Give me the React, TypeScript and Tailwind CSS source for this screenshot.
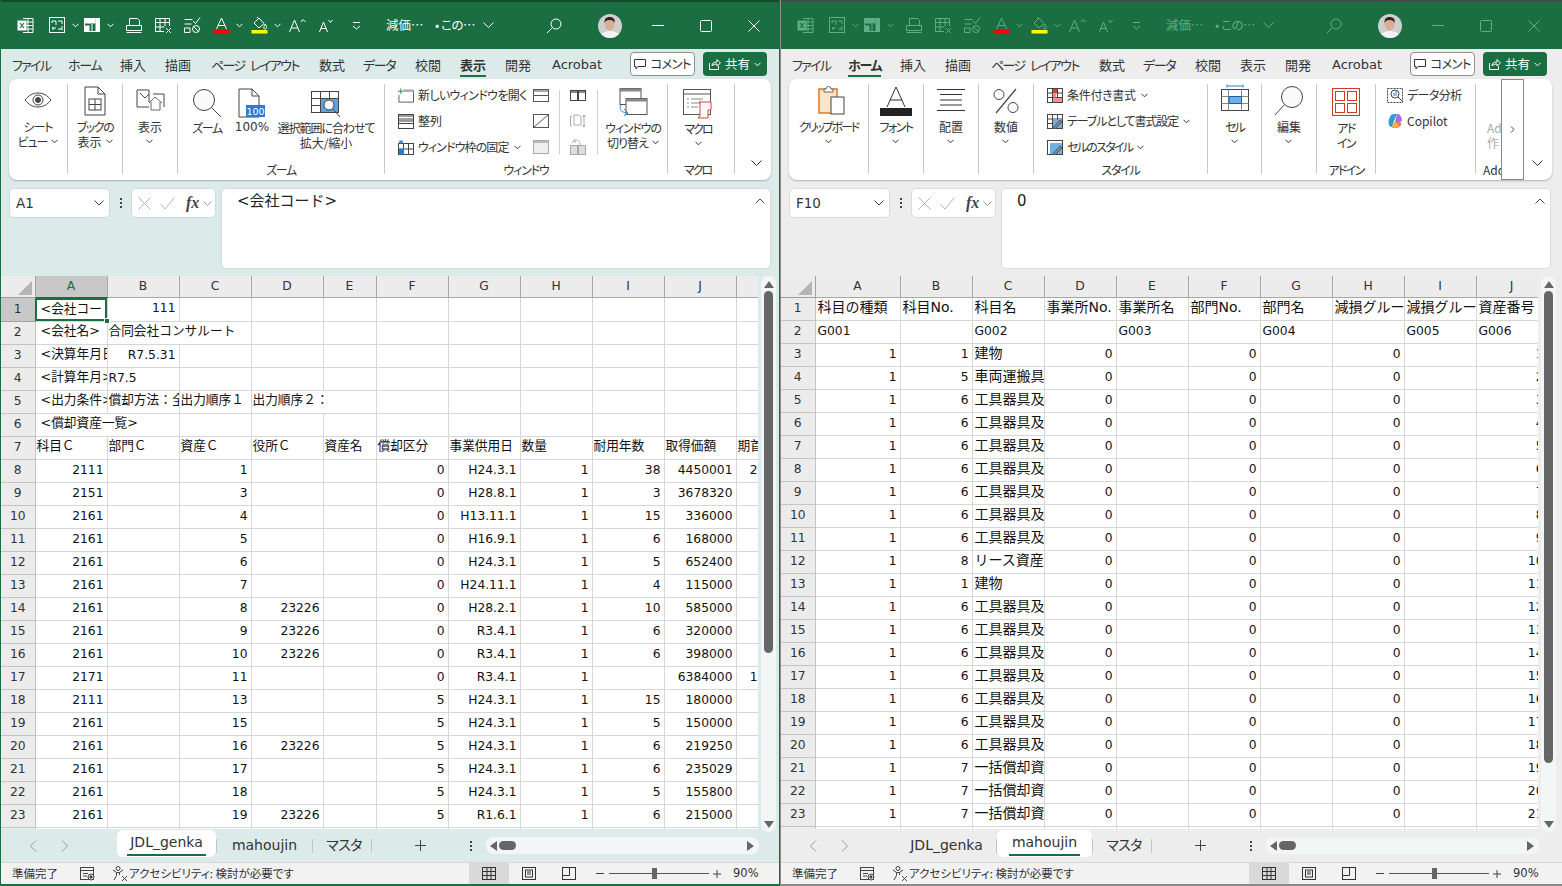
import React from "react";

const DK = "#444444";

const S = ({ w, h, children, className = "" }: { w: number; h: number; children: React.ReactNode; className?: string }) => (
  <svg width={w} height={h} viewBox={`0 0 ${w} ${h}`} fill="none" stroke="currentColor" strokeWidth="1" className={"shrink-0 block " + className}>
    {children}
  </svg>
);

const Chev = ({ className = "" }: { className?: string }) => (
  <svg width="7" height="5" viewBox="0 0 7 5" fill="none" stroke="currentColor" strokeWidth="1" className={"shrink-0 inline-block " + className}>
    <path d="M.5 .8 3.500 3.800 6.500 .8" />
  </svg>
);

const Q = {
  excel: () => (
    <S w={17} h={17}>
      <path d="M6 1.500h10v14H6" />
      <path d="M6 5h10M6 8.500h10M6 12h10M11 1.500v14" />
      <rect x=".5" y="3.500" width="9" height="10" fill="currentColor" stroke="none" />
      <path d="M3 6l4 5M7 6l-4 5" stroke="#1a6e41" strokeWidth="1.200" />
    </S>
  ),
  form: () => (
    <S w={17} h={17}>
      <rect x=".5" y=".5" width="15" height="15" />
      <path d="M3 4h4v4M3 4v2M9 4h4M13 4v3M9 12h3M13 9v4l-1.500-1.500M4 10v3M7 11H3" />
    </S>
  ),
  freeze: () => (
    <S w={17} h={17}>
      <rect x=".5" y="1.500" width="15" height="13" />
      <rect x="1" y="2" width="4" height="4" fill="currentColor" />
      <rect x="1" y="9" width="4" height="5" fill="currentColor" />
      <rect x="5" y="2" width="6" height="4" fill="currentColor" />
      <rect x="12" y="2" width="3" height="12" fill="currentColor" />
      <path d="M8 7v7" />
    </S>
  ),
  print: () => (
    <S w={17} h={17}>
      <path d="M3.500 8V1.500h8l2 2V8" />
      <path d="M.5 8.500h15v5H.5zM.5 15.500h15" />
    </S>
  ),
  tableX: () => (
    <S w={17} h={17}>
      <path d="M9 14.500H.5v-13h14V9M.5 5.500h14M.5 10h9M5 1.500v13M10 1.500V9" />
      <path d="M11 11l5 5M16 11l-5 5" />
    </S>
  ),
  checks: () => (
    <S w={17} h={17}>
      <path d="M.5 2.500h8M.5 7h7M.5 11h5.500v4.500H.5z" />
      <path d="M9 4l2.500 2.500L16 .5" />
      <circle cx="12" cy="12" r="3.500" />
      <path d="M9.500 9.500l5 5" />
    </S>
  ),
  fontA: () => (
    <svg width="17" height="17" viewBox="0 0 17 17" fill="none" stroke="currentColor" className="shrink-0 block">
      <path d="M3.500 12 8.500 1l5 11M5 8.500h7" />
      <rect x="0.500" y="13" width="16" height="3.500" fill="#ff0000" stroke="none" />
    </svg>
  ),
  fill: () => (
    <svg width="17" height="17" viewBox="0 0 17 17" fill="none" stroke="currentColor" className="shrink-0 block">
      <path d="M8 1 3 6l5 5 5-4.500zM7 1l-1-1M14 7c2 2 2 5 0 5s-1-3 0-5" />
      <rect x="0.500" y="13" width="16" height="3.500" fill="#ffff00" stroke="none" />
    </svg>
  ),
  grow: () => (
    <S w={17} h={15}>
      <path d="M.5 14 5.500 2l5 12M2.200 10h6.500M12 4l2-2.500L16.500 4" />
    </S>
  ),
  shrink: () => (
    <S w={14} h={15}>
      <path d="M.5 14 4.500 4l4 10M2 10.500h5M9.500 2l2 2.500L13.500 2" />
    </S>
  ),
  more: () => (
    <S w={9} h={9}>
      <path d="M1 1.500h7M1 5l3.500 3L8 5" />
    </S>
  ),
};

const Avatar = ({ id }: { id: string }) => (
  <svg width="24" height="24" viewBox="0 0 24 24" className="block shrink-0">
    <circle cx="12" cy="12" r="12" fill="#cfcfcf" />
    <clipPath id={id}><circle cx="12" cy="12" r="12" /></clipPath>
    <g clipPath={`url(#${id})`}>
      <path d="M2 24c0-5 5-7 10-7s10 2 10 7z" fill="#f4f4f4" />
      <ellipse cx="11.500" cy="10.500" rx="4.800" ry="6" fill="#d9ae94" />
      <path d="M6.500 9c-.5-4 2-6 5-6s6 1.500 5 6c-1-2-2-3-5-3s-4 1-5 3z" fill="#2a2522" />
    </g>
  </svg>
);

function TitleBar({ active }: { active: boolean }) {
  const c = active ? "text-white" : "text-[#5fae85]";
  return (
    <div className={`h-[49px] shrink-0 flex items-center bg-[#1a6e41] ${c} ${active ? "border-t-2 border-[#0f4a2a]" : "border-t-2 border-[#4a4a4a]"}`}>
      <div className="w-[16px] shrink-0" />
      <Q.excel />
      <div className="w-[15px]" />
      <Q.form />
      <Chev className="ml-[6px] mr-[5px]" />
      <Q.freeze />
      <Chev className="ml-[6px] mr-[12px]" />
      <Q.print />
      <div className="w-[12px]" />
      <Q.tableX />
      <div className="w-[12px]" />
      <Q.checks />
      <div className="w-[12px]" />
      <Q.fontA />
      <Chev className="ml-[6px] mr-[8px]" />
      <Q.fill />
      <Chev className="ml-[6px] mr-[8px]" />
      <Q.grow />
      <div className="w-[13px]" />
      <Q.shrink />
      <div className="w-[19px]" />
      <Q.more />
      <span className="ml-[25px] w-[49px] text-[12.500px] whitespace-nowrap">減価⋯</span>
      <span className="w-[48px] text-[12.500px] whitespace-nowrap tracking-[-0.5px]">• この⋯</span>
      <svg width="11" height="7" viewBox="0 0 11 7" fill="none" stroke="currentColor" className="shrink-0"><path d="M.5 .5l5 5 5-5" /></svg>
      <svg width="16" height="16" viewBox="0 0 16 16" fill="none" stroke="currentColor" className="shrink-0 ml-[52px]"><circle cx="10" cy="6" r="5" /><path d="M6.500 9.500 1 15" /></svg>
      <div className="w-[36px]" />
      <Avatar id={active ? "av1" : "av2"} />
      <svg width="12" height="1" viewBox="0 0 12 1" stroke="currentColor" className="shrink-0 ml-[30px]"><path d="M0 .5h12" /></svg>
      <svg width="12" height="12" viewBox="0 0 12 12" fill="none" stroke="currentColor" className="shrink-0 ml-[36px]"><rect x=".5" y=".5" width="11" height="11" rx="1" /></svg>
      <svg width="12" height="12" viewBox="0 0 12 12" fill="none" stroke="currentColor" className="shrink-0 ml-[36px]"><path d="M.5 .5l11 11M11.500 .5l-11 11" /></svg>
    </div>
  );
}

const TABS: [string, string, string][] = [
  ["ファイル", "w-[56px]", "tracking-[-1.700px]"],
  ["ホーム", "w-[52px]", "tracking-[-1.300px]"],
  ["挿入", "w-[45px]", ""],
  ["描画", "w-[46px]", ""],
  ["ページ レイアウト", "w-[108px]", "tracking-[-1.600px] [word-spacing:4px]"],
  ["数式", "w-[44px]", ""],
  ["データ", "w-[52px]", "tracking-[-1.300px]"],
  ["校閲", "w-[45px]", ""],
  ["表示", "w-[45px]", ""],
  ["開発", "w-[47px]", ""],
];

function TabRow({ selected, pr }: { selected: string; pr: string }) {
  return (
    <div className={`h-[30px] shrink-0 flex items-center text-[13px] text-[#333] pl-[11px] ${pr}`}>
      {TABS.map(([t, w, tk]) => (
        <div key={t} className={`${w} shrink-0 pt-[2px]`}>
          <span className={`inline-block leading-[18px] pt-[2px] pb-[1px] whitespace-nowrap border-b-2 ${tk} ${t === selected ? "border-[#1a6e41] font-bold" : "border-transparent"}`}>{t}</span>
        </div>
      ))}
      <span className="font-['DejaVu_Sans',sans-serif] text-[13px] mt-[2px]">Acrobat</span>
      <div className="flex-1" />
      <div className="w-[65px] h-[24px] rounded-[4px] border border-[#8e8e8e] bg-white flex items-center justify-center gap-[4px] text-[12.500px] tracking-[-0.800px]">
        <svg width="12" height="11" viewBox="0 0 12 11" fill="none" stroke="#333" className="shrink-0"><path d="M.5 .5h11v7H4L2 10V7.500H.5z" /></svg>
        コメント
      </div>
      <div className="ml-[8px] w-[64px] h-[24px] rounded-[4px] bg-[#1a6e41] text-white flex items-center justify-center gap-[4px] text-[12.500px]">
        <svg width="12" height="12" viewBox="0 0 12 12" fill="none" stroke="white" className="shrink-0"><path d="M.5 5v6.500h9V8M3 8c0-3 2-4 5-4V1.500L11.500 5 8 8V6C6 6 4 6.500 3 8z" /></svg>
        共有
        <Chev />
      </div>
    </div>
  );
}

const TR: Record<string, string> = {
  "シート": "tracking-[-1px]",
  "ビュー": "tracking-[-1px]",
  "ブックの": "tracking-[-1.500px]",
  "ズーム": "tracking-[-1.300px]",
  "選択範囲に合わせて": "tracking-[-1px]",
  "ウィンドウの": "tracking-[-1.200px]",
  "切り替え": "tracking-[-1px]",
  "マクロ": "tracking-[-2px]",
  "クリップボード": "tracking-[-2.100px]",
  "フォント": "tracking-[-1.500px]",
  "セル": "tracking-[-2px]",
  "アド": "tracking-[-1.500px]",
  "イン": "tracking-[-1.500px]",
  "新しいウィンドウを開く": "tracking-[-0.650px]",
  "ウィンドウ枠の固定": "tracking-[-0.900px]",
  "条件付き書式": "tracking-[-0.300px]",
  "テーブルとして書式設定": "tracking-[-1.100px]",
  "セルのスタイル": "tracking-[-1.700px]",
  "データ分析": "tracking-[-0.600px]",
  "ウィンドウ": "tracking-[-1.200px]",
  "スタイル": "tracking-[-1.200px]",
  "アドイン": "tracking-[-1.700px]",
  "100%": "font-['DejaVu_Sans',sans-serif]",
};
const tr = (t?: string) => (t && TR[t]) || "";

function Group({ w, label, children, lp = "" }: { w: string; label?: string; children: React.ReactNode; lp?: string }) {
  return (
    <div className={`${w} shrink-0 h-[90px] flex flex-col border-r border-[#c8c8c8]`}>
      <div className="flex-1 min-h-0 flex">{children}</div>
      <div className={`h-[12px] -mb-[2px] mt-[-2px] flex items-center justify-center text-[12px] leading-[12px] whitespace-nowrap text-[#333] ${lp} ${tr(label)}`}>{label}</div>
    </div>
  );
}

function Big({ icon, lines, w, chev = "inline", pt = "pt-[2px]", lt = "" }: { icon: React.ReactNode; lines: string[]; w: string; chev?: "inline" | "below" | "none"; pt?: string; lt?: string }) {
  return (
    <div className={`${w} shrink-0 flex flex-col items-center text-[12px] leading-[15px] text-[#333]`}>
      <div className={`h-[36px] w-full flex items-start justify-center ${pt}`}>{icon}</div>
      <div className={`flex flex-col items-center whitespace-nowrap ${lt}`}>
        {lines.map((l, i) => (
          <div key={l} className="flex items-center gap-[4px]">
            <span className={tr(l)}>{l}</span>
            {chev === "inline" && i === lines.length - 1 ? <Chev /> : null}
          </div>
        ))}
        {chev === "below" ? <div className="h-[15px] flex items-center"><Chev /></div> : null}
      </div>
    </div>
  );
}

function Small({ icon, text, chev }: { icon: React.ReactNode; text: string; chev?: boolean }) {
  return (
    <div className="h-[26px] flex items-center gap-[4px] text-[12px] whitespace-nowrap text-[#333]">
      <span className="w-[16px] flex justify-center shrink-0">{icon}</span>
      <span className={tr(text)}>{text}</span>
      {chev ? <Chev className="ml-[1px]" /> : null}
    </div>
  );
}

const IconEye = () => (
  <svg width="28" height="16" viewBox="0 0 28 16" fill="none" stroke={DK}><path d="M1 8c4-5 8-7 13-7s9 2 13 7c-4 5-8 7-13 7S5 13 1 8z" /><circle cx="14" cy="8" r="5" /><circle cx="14" cy="8" r="2.500" fill={DK} /></svg>
);
const IconBook = () => (
  <svg width="22" height="30" viewBox="0 0 22 30" fill="none" stroke={DK}><path d="M1 1h13l7 7v21H1zM14 1v7h7" /><rect x="5" y="13" width="12" height="11" /><path d="M5 18.500h12M11 13v11" /></svg>
);
const IconView = () => (
  <svg width="29" height="24" viewBox="0 0 29 24" fill="none" stroke={DK}><path d="M1 18V1h12v12M1 18h12M17 5h11M28 5v13" /><path d="M4 4l5 5 4-4" /><path d="M13 14l6-6 7 6M15 13v8h9v-8" stroke="#666" fill="#fff" /></svg>
);
const IconSearch = () => (
  <svg width="30" height="30" viewBox="0 0 30 30" fill="none" stroke={DK}><circle cx="12" cy="12" r="10.500" fill="#fafafa" /><path d="M19.500 19.500 29 29" /></svg>
);
const IconSearchR = () => (
  <svg width="30" height="30" viewBox="0 0 30 30" fill="none" stroke={DK}><circle cx="18" cy="11" r="10.500" fill="#fafafa" /><path d="M10.500 18.500 1 29" /></svg>
);
const Icon100 = () => (
  <svg width="28" height="30" viewBox="0 0 28 30" fill="none"><path d="M1 1h13l7 7v21H1zM14 1v7h7" stroke={DK} /><rect x="8" y="17" width="19" height="12" fill="#2b7cd3" /><text x="17.500" y="26.500" fontSize="9.500" fill="#fff" textAnchor="middle" fontFamily="DejaVu Sans">100</text></svg>
);
const IconFit = () => (
  <svg width="31" height="28" viewBox="0 0 31 28" fill="none"><rect x=".5" y=".5" width="27" height="21" stroke={DK} /><path d="M.5 7.500h27M.5 14.500h10M9.500 .5v21M18.500 .5v7" stroke={DK} /><rect x="10" y="8" width="17" height="13" fill="#5ba3de" /><circle cx="18" cy="14" r="5" fill="#fafafa" stroke={DK} /><path d="M22 18l7 8" stroke={DK} /></svg>
);
const IconSwitch = () => (
  <svg width="30" height="30" viewBox="0 0 30 30" fill="none"><rect x="2" y=".5" width="21" height="16" fill="#fff" stroke="#555" /><rect x="2" y=".5" width="21" height="3" fill="#888" /><rect x="8" y="10.500" width="21" height="16" fill="#fff" stroke="#555" /><rect x="8" y="10.500" width="21" height="3" fill="#888" /><path d="M3 17c-3 5 2 8 7 8M6 21l4 4-4 3" stroke="#2b88d8" /></svg>
);
const IconMacro = () => (
  <svg width="30" height="30" viewBox="0 0 30 30" fill="none"><rect x=".5" y=".5" width="27" height="25" fill="#fff" stroke="#555" /><path d="M.5 5h27" stroke="#555" /><path d="M4 10h2M8 10h12M4 14h2M8 14h10M4 18h2M8 18h7" stroke="#888" /><path d="M16 13h12v8h-3v8H15l2-2V13z" fill="#fff" stroke="#e03a3a" /></svg>
);

const ms = {
  newWin: () => <svg width="17" height="15" viewBox="0 0 17 15" fill="none" stroke="#555"><path d="M6 2.500h10.500v12H1V7" /><path d="M6 1h10.500v2.500H6z" fill="#aaa" stroke="none" /><path d="M3 0v6M0 3h6" stroke="#2b8a4b" /></svg>,
  arrange: () => <svg width="16" height="15" viewBox="0 0 16 15" fill="none" stroke="#444"><rect x=".5" y=".5" width="15" height="14" /><path d="M.5 5h15M.5 9.500h15" /><rect x="1" y="1" width="14" height="2" fill="#999" stroke="none" /><rect x="1" y="6" width="14" height="2" fill="#999" stroke="none" /></svg>,
  freeze: () => <svg width="16" height="15" viewBox="0 0 16 15" fill="none" stroke="#444"><rect x=".5" y="3.500" width="15" height="11" /><path d="M5.500 3.500v11M10.500 3.500v11M.5 9h15" /><rect x="1" y="9" width="5" height="5.500" fill="#2b7cd3" stroke="none" /><path d="M3 0v4M1 1l4 2M5 1L1 3" stroke="#2b7cd3" /></svg>,
  split: () => <svg width="16" height="13" viewBox="0 0 16 13" fill="none" stroke="#555"><rect x=".5" y=".5" width="15" height="12" /><path d="M.5 6.500h15" /><rect x="1" y="1" width="14" height="2" fill="#aaa" stroke="none" /></svg>,
  hide: () => <svg width="16" height="14" viewBox="0 0 16 14" fill="none" stroke="#555"><rect x=".5" y=".5" width="15" height="13" /><path d="M1 13 15 1" /></svg>,
  unhide: () => <svg width="16" height="14" viewBox="0 0 16 14" fill="#eee" stroke="#aaa"><rect x=".5" y=".5" width="15" height="13" /><rect x="1" y="1" width="14" height="2" fill="#bbb" stroke="none" /></svg>,
  book: () => <svg width="16" height="11" viewBox="0 0 16 11" fill="none" stroke="#444"><rect x=".5" y=".5" width="7" height="10" /><rect x="8.500" y=".5" width="7" height="10" /><rect x="1" y="1" width="6" height="2" fill="#888" stroke="none" /><rect x="9" y="1" width="6" height="2" fill="#888" stroke="none" /></svg>,
  sync: () => <svg width="16" height="14" viewBox="0 0 16 14" fill="none" stroke="#aaa"><path d="M2 2H.5v10H2M4 1h5l2 2v8H4zM14 1v12M12.500 3 14 1l1.500 2M12.500 11l1.500 2 1.500-2" /></svg>,
  reset: () => <svg width="16" height="16" viewBox="0 0 16 16" fill="none" stroke="#aaa"><rect x=".5" y="6.500" width="7" height="9" fill="#ddd" /><rect x="8.500" y="6.500" width="7" height="9" fill="#ddd" /><path d="M2 4l2-3 2 3M4 1c4 0 6 1 6 5" /></svg>,
  cond: () => <svg width="16" height="15" viewBox="0 0 16 15" fill="none" stroke="#444"><rect x=".5" y=".5" width="15" height="14" /><path d="M.5 5h15M.5 9.500h15M5.500 .5v14M10.500 .5v14" /><rect x="6" y="1" width="4" height="4" fill="#e03a3a" stroke="none" /><rect x="6" y="10" width="9" height="4" fill="#f09090" stroke="none" /><rect x="6" y="5.500" width="3" height="4" fill="#f09090" stroke="none" /></svg>,
  tableF: () => <svg width="16" height="15" viewBox="0 0 16 15" fill="none" stroke="#444"><rect x=".5" y=".5" width="15" height="14" /><path d="M.5 5h15M5.500 .5v14M10.500 .5v14M.5 9.500h15" /><rect x="6" y="5.500" width="9" height="8.500" fill="#6fb1e6" stroke="none" /><path d="M6 14l7-8 2 2-7 7z" fill="#888" stroke="#555" /></svg>,
  cellS: () => <svg width="16" height="15" viewBox="0 0 16 15" fill="none" stroke="#444"><rect x=".5" y=".5" width="15" height="14" /><rect x="3" y="3" width="12" height="11" fill="#6fb1e6" stroke="none" /><path d="M6 14l7-8 2 2-7 7z" fill="#888" stroke="#555" /></svg>,
  data: () => <svg width="16" height="15" viewBox="0 0 16 15" fill="none" stroke="#444"><rect x=".5" y=".5" width="15" height="14" strokeDasharray="2 1" /><circle cx="8" cy="6" r="4" fill="#fff" /><path d="M7 8V5M9 8V3" stroke="#2b7cd3" /><path d="M11 9l4 4" /></svg>,
  copilot: () => <svg width="16" height="16" viewBox="0 0 16 16"><path d="M3 4c1-3 3-3 5-3h2L7 8l-2 6C2 14 0 9 3 4z" fill="#2f9bd8" /><path d="M10 1c3 0 4 2 5 6 0 1-1 2-3 2H8z" fill="#a66be0" /><path d="M8 9h4c2 0 3 1 2 3s-3 3-5 3H5z" fill="#f0756a" /><path d="M5 14c2 1 5 1 7-1l-3-4H7z" fill="#f3b33d" /></svg>,
};

const Clip = () => (
  <svg width="27" height="30" viewBox="0 0 27 30" fill="none" className="ml-[6px]"><rect x="1" y="3" width="18" height="24" fill="#fbe5c8" stroke="#d97b1f" strokeWidth="1.500" /><path d="M6 6V3h2a2.500 2.500 0 0 1 5 0h2v3z" fill="#fff" stroke="#666" /><rect x="13" y="11" width="13" height="17" fill="#fff" stroke="#444" /></svg>
);
const FontBig = () => (
  <svg width="32" height="30" viewBox="0 0 32 30" fill="none" stroke="#333"><path d="M7 21 16 1l9 20M10 14h12" /><rect x="0" y="22" width="32" height="8" fill="#222" stroke="none" /></svg>
);
const Align = () => (
  <svg width="28" height="22" viewBox="0 0 28 22" fill="none" stroke="#333"><path d="M0 .5h28M3 5.500h22M3 11h22M3 16h22M0 21.500h28" /></svg>
);
const Pct = () => (
  <svg width="26" height="26" viewBox="0 0 26 26" fill="none" stroke="#444"><path d="M23 1 3 25" strokeWidth="1.200" /><circle cx="6" cy="6.500" r="5" /><circle cx="20" cy="19.500" r="5" /></svg>
);
const CellI = () => (
  <svg width="28" height="27" viewBox="0 0 28 27" fill="none"><path d="M6 .5v3M22 .5v3M6 2h16" stroke="#2b7cd3" /><rect x=".5" y="5.500" width="27" height="21" stroke="#444" /><path d="M.5 12.500h27M.5 19.500h27M7.500 5.500v21M20.500 5.500v21" stroke="#888" /><rect x="8" y="12.500" width="12.500" height="7" fill="#6fb1e6" stroke="#1f5fa8" /></svg>
);
const AddIn = () => (
  <svg width="28" height="28" viewBox="0 0 28 28" fill="none" stroke="#d13a1e"><rect x=".5" y=".5" width="27" height="27" /><rect x="3.500" y="3.500" width="9" height="9" /><rect x="15.500" y="3.500" width="9" height="9" /><rect x="3.500" y="15.500" width="9" height="9" /><rect x="15.500" y="15.500" width="9" height="9" /></svg>
);

const Expand = () => (
  <div className="flex-1 h-[90px] flex items-end justify-end pr-[9px] pb-[7px] text-[#333]">
    <svg width="11" height="7" viewBox="0 0 11 7" fill="none" stroke="currentColor"><path d="M.5 .5l5 5 5-5" /></svg>
  </div>
);

function ViewRibbon() {
  return (
    <>
      <Group w="w-[59px]"><Big w="w-full" pt="pt-[8px]" lt="-mt-[1px]" icon={<IconEye />} lines={["シート", "ビュー"]} /></Group>
      <Group w="w-[55px]"><Big w="w-full" pt="pt-[2px]" lt="-mt-[1px]" icon={<IconBook />} lines={["ブックの", "表示"]} /></Group>
      <Group w="w-[55px]"><Big w="w-full" pt="pt-[5px]" lt="-mt-[1px]" icon={<IconView />} lines={["表示"]} chev="below" /></Group>
      <Group w="w-[207px]" label="ズーム">
        <Big w="w-[58px]" pt="pt-[4px]" icon={<IconSearch />} lines={["ズーム"]} chev="none" />
        <Big w="w-[32px]" pt="pt-[4px]" icon={<Icon100 />} lines={["100%"]} chev="none" />
        <div className="w-[8px] shrink-0" />
        <Big w="w-[100px]" pt="pt-[7px]" icon={<IconFit />} lines={["選択範囲に合わせて", "拡大/縮小"]} chev="none" />
      </Group>
      <Group w="w-[283px]" label="ウィンドウ">
        <div className="w-[174px] flex shrink-0 pl-[13px]">
          <div className="flex flex-col w-[135px] shrink-0 -mt-[2px]">
            <Small icon={ms.newWin()} text="新しいウィンドウを開く" />
            <Small icon={ms.arrange()} text="整列" />
            <Small icon={ms.freeze()} text="ウィンドウ枠の固定" chev />
          </div>
          <div className="flex flex-col w-[20px] shrink-0 -mt-[2px]">
            <div className="h-[26px] flex items-center">{ms.split()}</div>
            <div className="h-[26px] flex items-center">{ms.hide()}</div>
            <div className="h-[26px] flex items-center">{ms.unhide()}</div>
          </div>
        </div>
        <div className="h-[64px] mt-[6px] w-px bg-[#d0d0d0] shrink-0" />
        <div className="flex flex-col w-[37px] shrink-0 pl-[10px] -mt-[2px]">
          <div className="h-[26px] flex items-center">{ms.book()}</div>
          <div className="h-[26px] flex items-center">{ms.sync()}</div>
          <div className="h-[26px] flex items-center">{ms.reset()}</div>
        </div>
        <div className="h-[64px] mt-[6px] w-px bg-[#d0d0d0] shrink-0" />
        <Big w="w-[70px]" pt="pt-[4px]" icon={<IconSwitch />} lines={["ウィンドウの", "切り替え"]} />
      </Group>
      <Group w="w-[67px]" label="マクロ" lp="pr-[7px]"><Big w="w-[60px]" pt="pt-[5px]" lt="mt-[1px]" icon={<IconMacro />} lines={["マクロ"]} chev="below" /></Group>
      <Expand />
    </>
  );
}

function HomeRibbon() {
  return (
    <>
      <Group w="w-[80px]"><Big w="w-full" pt="pt-[2px]" lt="-mt-[1px]" icon={<Clip />} lines={["クリップボード"]} chev="below" /></Group>
      <Group w="w-[55px]"><Big w="w-full" pt="pt-[2px]" lt="-mt-[1px]" icon={<FontBig />} lines={["フォント"]} chev="below" /></Group>
      <Group w="w-[55px]"><Big w="w-full" pt="pt-[5px]" lt="-mt-[1px]" icon={<Align />} lines={["配置"]} chev="below" /></Group>
      <Group w="w-[55px]"><Big w="w-full" pt="pt-[4px]" lt="-mt-[1px]" icon={<Pct />} lines={["数値"]} chev="below" /></Group>
      <Group w="w-[174px]" label="スタイル">
        <div className="flex flex-col pl-[13px] -mt-[2px]">
          <Small icon={ms.cond()} text="条件付き書式" chev />
          <Small icon={ms.tableF()} text="テーブルとして書式設定" chev />
          <Small icon={ms.cellS()} text="セルのスタイル" chev />
        </div>
      </Group>
      <Group w="w-[54px]"><Big w="w-full" pt="pt-[0px]" lt="-mt-[1px]" icon={<CellI />} lines={["セル"]} chev="below" /></Group>
      <Group w="w-[55px]"><Big w="w-full" pt="pt-[2px]" lt="-mt-[1px]" icon={<IconSearchR />} lines={["編集"]} chev="below" /></Group>
      <Group w="w-[59px]" label="アドイン"><Big w="w-full" pt="pt-[4px]" icon={<AddIn />} lines={["アド", "イン"]} chev="none" /></Group>
      <Group w="w-[100px]">
        <div className="flex flex-col pl-[11px] -mt-[2px]">
          <Small icon={ms.data()} text="データ分析" />
          <Small icon={ms.copilot()} text="Copilot" />
        </div>
      </Group>
      <div className="w-[25px] shrink-0 h-[96px] flex flex-col pl-[7px] text-[12px] leading-[15px] text-[#aaa] overflow-hidden whitespace-nowrap">
        <div className="mt-[36px] ml-[4px]">Ad</div>
        <div className="ml-[4px]">作</div>
        <div className="mt-[12px] text-[#333]">Add</div>
      </div>
      <div className="w-[23px] shrink-0 -mt-[5px] h-[101px] border border-[#8a8a8a] bg-white flex items-center justify-center text-[#444]">
        <svg width="5" height="7" viewBox="0 0 5 7" fill="none" stroke="currentColor"><path d="M1 .5l3 3-3 3" /></svg>
      </div>
      <Expand />
    </>
  );
}

function FormulaBar({ name, value, active }: { name: string; value: string; active: boolean }) {
  const border = active ? "border-[#d0dcda]" : "border-[#dcdcdc]";
  return (
    <div className="h-[81px] mt-[8px] shrink-0 flex ml-[8px] text-[#333]">
      <div className={`w-[101px] h-[30px] shrink-0 bg-white rounded-[5px] border ${border} flex items-center justify-between pl-[6px] pr-[5px] font-['DejaVu_Sans',sans-serif] text-[13.500px]`}>
        {name}
        <svg width="10" height="6" viewBox="0 0 10 6" fill="none" stroke="#444"><path d="M.5 .5 5 5 9.500 .5" /></svg>
      </div>
      <div className="w-[21px] h-[30px] shrink-0 flex flex-col items-center justify-center gap-[2px]">
        <span className="w-[2px] h-[2px] bg-[#444]" /><span className="w-[2px] h-[2px] bg-[#444]" /><span className="w-[2px] h-[2px] bg-[#444]" />
      </div>
      <div className={`w-[85px] h-[30px] shrink-0 bg-white rounded-[5px] border ${border} flex items-center pl-[6px]`}>
        <svg width="13" height="13" viewBox="0 0 13 13" fill="none" stroke="#b5b5b5"><path d="M.5 .5l12 12M12.500 .5l-12 12" /></svg>
        <svg width="15" height="13" viewBox="0 0 15 13" fill="none" stroke="#b5b5b5" className="ml-[9px]"><path d="M.5 7l4.500 5L14.500 .5" /></svg>
        <span className="ml-[11px] font-['Liberation_Serif',serif] italic font-bold text-[16px] text-[#444]">fx</span>
        <svg width="9" height="5" viewBox="0 0 9 5" fill="none" stroke="#999" className="ml-[4px]"><path d="M.5 .5l4 4 4-4" /></svg>
      </div>
      <div className={`ml-[5px] w-[550px] h-[81px] shrink-0 bg-white rounded-[5px] border ${border} flex items-start justify-between pl-[15px] pr-[5px] pt-[1px] text-[15px] leading-[22px] text-[#222] [font-feature-settings:normal] font-['DejaVu_Sans','Noto_Sans_CJK_JP',sans-serif]`}>
        {value}
        <svg width="10" height="6" viewBox="0 0 10 6" fill="none" stroke="#444" className="mt-[8px]"><path d="M.5 5.500 5 1l4.500 4.500" /></svg>
      </div>
    </div>
  );
}

type CV = string | number | null | { t: string | number; span?: number; right?: boolean };

function Cell({ v, cjkSize, lp }: { v: CV; cjkSize: string; lp: string }) {
  if (v === null || v === "") return <td className="border-r border-b border-[#d6d6d6] p-0" />;
  const o = typeof v === "object" ? v : { t: v };
  const right = typeof o.t === "number" || !!(o as { right?: boolean }).right;
  const s = String(o.t);
  const cjk = /[^\x00-\x7f]/.test(s);
  const pad = right ? "text-right pr-[3px] pl-[2px]" : s.startsWith("<") ? "text-left pl-[5px] pr-[1px]" : `text-left ${lp} pr-[1px]`;
  return (
    <td colSpan={(o as { span?: number }).span} className={`border-r border-b border-[#d6d6d6] pt-0 overflow-hidden whitespace-nowrap text-[#111] leading-[18px] ${pad} ${cjk ? `${cjkSize} pb-[3px]` : "text-[12.300px] pb-[2px]"}`}>
      {s}
    </td>
  );
}

function Sheet({ widths, headers, rows, selCol, selRow, thumb, cjkSize, lp }: { widths: number[]; headers: string[]; rows: CV[][]; selCol?: number; selRow?: number; thumb: string; cjkSize: string; lp: string }) {
  const total = widths.reduce((a, b) => a + b, 34);
  return (
    <div className="h-[553px] shrink-0 flex">
      <div className="w-[757px] shrink-0 h-full overflow-hidden bg-white">
        <table className="table-fixed border-collapse [font-feature-settings:normal] font-['DejaVu_Sans','Noto_Sans_CJK_JP',sans-serif]" style={{ width: total }}>
          <colgroup>
            <col style={{ width: 34 }} />
            {widths.map((w, i) => <col key={i} style={{ width: w }} />)}
          </colgroup>
          <thead>
            <tr className="h-[21px]">
              <th className="p-0 bg-[#ececec] border-r border-b border-[#a0a0a0] relative">
                <svg width="14" height="14" viewBox="0 0 14 14" className="absolute right-[3px] bottom-[2px]"><path d="M14 0v14H0z" fill="#b4b4b4" /></svg>
              </th>
              {headers.map((h, i) => (
                <th key={h} className={`p-0 font-normal text-[12.300px] border-r border-b border-[#a8a8a8] ${i === selCol ? "bg-[#c8c8c8] text-[#1a6e41] border-b-[#1a6e41]" : "bg-[#ececec] text-[#333]"}`}>{h}</th>
              ))}
            </tr>
          </thead>
          <tbody>
            {rows.map((r, i) => (
              <tr key={i} className="h-[23px]">
                <th className={`p-0 font-normal text-[12.300px] text-[#333] border-r border-b ${i === selRow ? "bg-[#c8c8c8] border-[#a0a0a0]" : "bg-[#ececec] border-[#c4c4c4]"}`}>{i < 23 ? i + 1 : ""}</th>
                {r.map((c, j) =>
                  i === selRow && j === selCol ? (
                    <td key={j} className={`p-0 ${cjkSize} border-r border-b border-[#d6d6d6] relative`}>
                      <div className="h-[23px] w-[calc(100%+1px)] -ml-px border-2 border-[#1a6e41] overflow-hidden whitespace-nowrap pl-[4px] leading-[17px] text-[#111]">{String(c)}</div>
                      <span className="absolute -right-[3px] -bottom-[3px] w-[6px] h-[6px] bg-[#1a6e41] border border-white" />
                    </td>
                  ) : (
                    <Cell key={j} v={c} cjkSize={cjkSize} lp={lp} />
                  )
                )}
              </tr>
            ))}
          </tbody>
        </table>
      </div>
      <div className="ml-[3px] w-[15px] h-[556px] shrink-0 rounded-[8px] bg-[#f3f6f6] flex flex-col items-center pt-[5px] relative z-10">
        <svg width="10" height="7" viewBox="0 0 10 7" className="shrink-0"><path d="M5 0l5 7H0z" fill="#666" /></svg>
        <div className={`w-[9px] ${thumb} mt-[3px] rounded-[5px] bg-[#666]`} />
        <div className="flex-1" />
        <svg width="10" height="7" viewBox="0 0 10 7" className="shrink-0 mb-[4px]"><path d="M5 7 10 0H0z" fill="#666" /></svg>
      </div>
    </div>
  );
}

function SheetTabs({ active }: { active: string }) {
  const tab = (t: string, w: string, x = "") =>
    t === active ? (
      <div key={t} className={`${w} h-[27px] shrink-0 rounded-[6px] bg-white flex flex-col items-center justify-center -mt-[5px]`}>
        <span className="border-b-2 border-[#1a6e41] px-[3px] leading-[17px] pb-[3px] mt-[3px]">{t}</span>
      </div>
    ) : (
      <div key={t} className={`${w} h-[14px] shrink-0 flex items-center justify-center ${x}`}>{t}</div>
    );
  return (
    <div className="h-[33px] shrink-0 flex items-center text-[14px] text-[#333] [font-feature-settings:normal] font-['DejaVu_Sans','Noto_Sans_CJK_JP',sans-serif]">
      <div className="w-[116px] shrink-0 flex pl-[28px] gap-[24px] text-[#9a9a9a]">
        <svg width="8" height="12" viewBox="0 0 8 12" fill="none" stroke="currentColor"><path d="M7 .5 1.500 6 7 11.500" /></svg>
        <svg width="8" height="12" viewBox="0 0 8 12" fill="none" stroke="currentColor"><path d="M1 .5 6.500 6 1 11.500" /></svg>
      </div>
      {tab("JDL_genka", "w-[99px]")}
      <div className="w-px h-[14px] bg-[#c4c4c4] shrink-0" />
      {tab("mahoujin", "w-[95px]")}
      <div className="w-px h-[14px] bg-[#c4c4c4] shrink-0" />
      {tab("マスタ", "w-[58px]", "pl-[3px] tracking-[-2px]")}
      <div className="w-px h-[14px] bg-[#c4c4c4] shrink-0" />
      <div className="w-[91px] pl-[6px] shrink-0 flex justify-center">
        <svg width="11" height="11" viewBox="0 0 11 11" stroke="#444"><path d="M5.500 0v11M0 5.500h11" /></svg>
      </div>
      <div className="w-[16px] shrink-0 flex flex-col items-center gap-[2px]">
        <span className="w-[2px] h-[2px] bg-[#444]" /><span className="w-[2px] h-[2px] bg-[#444]" /><span className="w-[2px] h-[2px] bg-[#444]" />
      </div>
      <div className="w-[273px] ml-[7px] h-[17px] shrink-0 rounded-[8px] bg-[#f3f6f6] flex items-center pl-[4px] pr-[5px]">
        <svg width="7" height="10" viewBox="0 0 7 10"><path d="M0 5l7-5v10z" fill="#666" /></svg>
        <div className="w-[17px] h-[9px] rounded-[5px] bg-[#666] ml-[2px]" />
        <div className="flex-1" />
        <svg width="7" height="10" viewBox="0 0 7 10"><path d="M7 5 0 0v10z" fill="#666" /></svg>
      </div>
    </div>
  );
}

function StatusBar({ pl }: { pl: string }) {
  return (
    <div className={`h-[22px] shrink-0 bg-[#f2f2f2] border-t border-[#d8d8d8] flex items-center text-[11.500px] text-[#333] ${pl}`}>
      <span className="w-[68px] shrink-0 whitespace-nowrap">準備完了</span>
      <svg width="15" height="14" viewBox="0 0 15 14" fill="none" stroke="#444" className="shrink-0"><rect x=".5" y=".5" width="13" height="12" /><path d="M.5 3.500h13M3 6.500h5M3 9h4" /><circle cx="11" cy="10" r="3" fill="#f2f2f2" /><circle cx="11" cy="10" r="1.200" fill="#444" /></svg>
      <svg width="16" height="15" viewBox="0 0 16 15" fill="none" stroke="#444" className="shrink-0 ml-[17px]"><circle cx="6" cy="2.500" r="2" /><path d="M1 4l3.500 2.500h3L11 4M4.500 6.500v3L2 14M7.500 6.500V9M10 10l5 5M15 10l-5 5" /></svg>
      <span className="ml-[1px] w-[340px] shrink-0 whitespace-nowrap">アクセシビリティ: 検討が必要です</span>
      <div className="w-[40px] h-[21px] bg-[#d9d9d9] shrink-0 flex items-center justify-center">
        <svg width="14" height="13" viewBox="0 0 14 13" fill="none" stroke="#333"><rect x=".5" y=".5" width="13" height="12" /><path d="M.5 4.500h13M.5 8.500h13M5 .5v12M9 .5v12" /></svg>
      </div>
      <div className="w-[40px] shrink-0 flex items-center justify-center">
        <svg width="14" height="13" viewBox="0 0 14 13" fill="none" stroke="#333"><rect x=".5" y=".5" width="13" height="12" /><rect x="3.500" y="3" width="7" height="7" /><path d="M5 5h4M5 7h4" /></svg>
      </div>
      <div className="w-[40px] shrink-0 flex items-center justify-center">
        <svg width="14" height="13" viewBox="0 0 14 13" fill="none" stroke="#333"><rect x=".5" y=".5" width="13" height="12" /><path d="M.5 8.500h7V.5" /></svg>
      </div>
      <svg width="8" height="1" viewBox="0 0 8 1" stroke="#444" className="ml-[7px] shrink-0"><path d="M0 .5h8" /></svg>
      <div className="ml-[5px] w-[100px] h-[11px] shrink-0 flex items-center">
        <div className="w-[43px] h-px bg-[#555]" />
        <div className="w-[5px] h-[11px] bg-[#666]" />
        <div className="w-[52px] h-px bg-[#555]" />
      </div>
      <svg width="8" height="8" viewBox="0 0 8 8" stroke="#444" className="ml-[4px] shrink-0"><path d="M0 4h8M4 0v8" /></svg>
      <span className="ml-[12px] font-['DejaVu_Sans',sans-serif] text-[11.500px] whitespace-nowrap">90%</span>
    </div>
  );
}

const lrow = (a: number, c: number, d: number | null, f: number, g: string, i: number | null, j: number, k: number | null = null): CV[] => [a, null, c, d, null, f, { t: g, right: true }, 1, i, j, k];

const LEFT_ROWS: CV[][] = [
  ["<会社コード>", 111, null, null, null, null, null, null, null, null, null],
  ["<会社名>", { t: "合同会社コンサルート", span: 2 }, null, null, null, null, null, null, null, null],
  ["<決算年月日>", { t: "R7.5.31", right: true }, null, null, null, null, null, null, null, null, null],
  ["<計算年月>", "R7.5", null, null, null, null, null, null, null, null, null],
  ["<出力条件>", "償却方法：全", "出力順序１", { t: "出力順序２：", span: 2 }, null, null, null, null, null, null],
  [{ t: "<償却資産一覧>", span: 2 }, null, null, null, null, null, null, null, null, null],
  ["科目Ｃ", "部門Ｃ", "資産Ｃ", "役所Ｃ", "資産名", "償却区分", "事業供用日", "数量", "耐用年数", "取得価額", "期首"],
  lrow(2111, 1, null, 0, "H24.3.1", 38, 4450001, 2000000),
  lrow(2151, 3, null, 0, "H28.8.1", 3, 3678320),
  lrow(2161, 4, null, 0, "H13.11.1", 15, 336000),
  lrow(2161, 5, null, 0, "H16.9.1", 6, 168000),
  lrow(2161, 6, null, 0, "H24.3.1", 5, 652400),
  lrow(2161, 7, null, 0, "H24.11.1", 4, 115000),
  lrow(2161, 8, 23226, 0, "H28.2.1", 10, 585000),
  lrow(2161, 9, 23226, 0, "R3.4.1", 6, 320000),
  lrow(2161, 10, 23226, 0, "R3.4.1", 6, 398000),
  lrow(2171, 11, null, 0, "R3.4.1", null, 6384000, 1000000),
  lrow(2111, 13, null, 5, "H24.3.1", 15, 180000),
  lrow(2161, 15, null, 5, "H24.3.1", 5, 150000),
  lrow(2161, 16, 23226, 5, "H24.3.1", 6, 219250),
  lrow(2161, 17, null, 5, "H24.3.1", 6, 235029),
  lrow(2161, 18, null, 5, "H24.3.1", 5, 155800),
  lrow(2161, 19, 23226, 5, "R1.6.1", 6, 215000),
  [null, null, null, null, null, null, null, null, null, null, null],
];

const KOGU = "工具器具及び備品";
const RIGHT_SRC: [number, string][] = [
  [1, "建物"], [5, "車両運搬具"], [6, KOGU], [6, KOGU], [6, KOGU], [6, KOGU], [6, KOGU], [6, KOGU], [6, KOGU],
  [8, "リース資産"], [1, "建物"], [6, KOGU], [6, KOGU], [6, KOGU], [6, KOGU], [6, KOGU], [6, KOGU], [6, KOGU],
  [7, "一括償却資産"], [7, "一括償却資産"], [7, "一括償却資産"],
];
const RIGHT_ROWS: CV[][] = [
  ["科目の種類", "科目No.", "科目名", "事業所No.", "事業所名", "部門No.", "部門名", "減損グループ", "減損グループ", "資産番号"],
  ["G001", null, "G002", null, "G003", null, "G004", null, "G005", "G006"],
  ...RIGHT_SRC.map(([b, c], i): CV[] => [1, b, c, 0, null, 0, null, 0, null, i + 1]),
  [null, null, null, null, null, null, null, null, null, null],
];

function Window({ active, tab, sheetTab, ribbon, cardW, pr, name, value, widths, headers, rows, selCol, selRow, thumb, borders, pls, cjkSize, lp }: {
  active: boolean; tab: string; sheetTab: string; ribbon: React.ReactNode; cardW: string; pr: string; name: string; value: string; widths: number[]; headers: string[]; rows: CV[][]; selCol?: number; selRow?: number; thumb: string; borders: string; pls: string; cjkSize: string; lp: string;
}) {
  return (
    <div className={`h-[886px] flex flex-col shrink-0 ${active ? "bg-[#dcebe9]" : "bg-[#ededed]"} ${borders}`}>
      <TitleBar active={active} />
      <TabRow selected={tab} pr={pr} />
      <div className={`${cardW} ml-[8px] h-[101px] shrink-0 bg-white rounded-[8px] shadow-[0_1px_2px_rgba(0,0,0,0.25)] flex items-start pt-[5px]`}>
        {ribbon}
      </div>
      <FormulaBar name={name} value={value} active={active} />
      <div className="h-[7px] shrink-0" />
      <Sheet widths={widths} headers={headers} rows={rows} selCol={selCol} selRow={selRow} thumb={thumb} cjkSize={cjkSize} lp={lp} />
      <SheetTabs active={sheetTab} />
      <StatusBar pl={pls} />
    </div>
  );
}

export default function App() {
  return (
    <div className="w-[1562px] h-[886px] overflow-hidden flex bg-[#777] [font-feature-settings:'palt'] font-['Noto_Sans_CJK_JP','Noto_Sans',sans-serif]">
      <div className="w-[780px] shrink-0">
        <Window
          active
          tab="表示"
          sheetTab="JDL_genka"
          ribbon={<ViewRibbon />}
          cardW="w-[762px]"
          pr="pr-[12px]"
          name="A1"
          value="<会社コード>"
          widths={[72, 72, 72, 72, 53, 72, 72, 72, 72, 72, 72]}
          headers={["A", "B", "C", "D", "E", "F", "G", "H", "I", "J", "K"]}
          rows={LEFT_ROWS}
          selCol={0}
          selRow={0}
          thumb="h-[362px]"
          borders="border-l border-r border-b-2 border-[#1a6e41]"
          pls="pl-[11px]"
          cjkSize="text-[12.700px]"
          lp="pl-[1px]"
        />
      </div>
      <div className="w-px shrink-0 bg-[#8a8a8a]" />
      <div className="w-[781px] shrink-0">
        <Window
          active={false}
          tab="ホーム"
          sheetTab="mahoujin"
          ribbon={<HomeRibbon />}
          cardW="w-[763px]"
          pr="pr-[15px]"
          name="F10"
          value="0"
          widths={[85, 72, 72, 72, 72, 72, 72, 72, 72, 71]}
          headers={["A", "B", "C", "D", "E", "F", "G", "H", "I", "J"]}
          rows={RIGHT_ROWS}
          thumb="h-[472px]"
          borders="border-b-2 border-[#8a8a8a]"
          pls="pl-[11px]"
          cjkSize="text-[14px]"
          lp="pl-[2px]"
        />
      </div>
    </div>
  );
}
